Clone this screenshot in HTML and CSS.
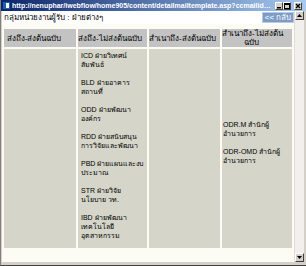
FILE: index.html
```html
<!DOCTYPE html>
<html lang="th">
<head>
    <meta charset="UTF-8">
    <title>detailmailtemplate</title>
    <link rel="stylesheet" href="styles.css">
</head>
<body>

    <div class="window">
        <div class="titlebar">
            <span class="app-icon"></span>
            <span class="title">http://nenuphar/iwebflow/home905/content/detailmailtemplate.asp?ccmailid=1024&amp;type=2</span>
            <span class="caption-buttons">
                <span class="cbtn">
                    <svg width="6" height="6" viewBox="0 0 6 6"><rect x="1" y="4" width="4" height="1.5" fill="#000"/></svg>
                </span>
                <span class="cbtn">
                    <svg width="6" height="6" viewBox="0 0 6 6"><rect x="0.5" y="0.5" width="5" height="5" fill="none" stroke="#000"/><rect x="0.5" y="0.5" width="5" height="1.5" fill="#000"/></svg>
                </span>
                <span class="cbtn close">
                    <svg width="6" height="6" viewBox="0 0 6 6"><path d="M1 1L5 5M5 1L1 5" stroke="#000" stroke-width="1.4"/></svg>
                </span>
            </span>
        </div>

        <div class="client">
            <div class="content">
                <div class="topbar">
                    <span class="group-label">กลุ่มหน่วยงานผู้รับ : ฝ่ายต่างๆ</span>
                    <span class="back-btn"><span class="arrows">&lt;&lt;</span> กลับ</span>
                </div>

                <table class="recipients">
                    <colgroup>
                        <col class="c1"><col class="c2"><col class="c3"><col class="c4">
                    </colgroup>
                    <tr>
                        <th>ส่งถึง-ส่งต้นฉบับ</th>
                        <th>ส่งถึง-ไม่ส่งต้นฉบับ</th>
                        <th>สำเนาถึง-ส่งต้นฉบับ</th>
                        <th>สำเนาถึง-ไม่ส่งต้น<br>ฉบับ</th>
                    </tr>
                    <tr>
                        <td></td>
                        <td class="list">
                            ICD ฝ่ายวิเทศน์<br>สัมพันธ์<br><br>
                            BLD ฝ่ายอาคาร<br>สถานที่<br><br>
                            ODD ฝ่ายพัฒนา<br>องค์กร<br><br>
                            RDD ฝ่ายสนับสนุน<br>การวิจัยและพัฒนา<br><br>
                            PBD ฝ่ายแผนและงบ<br>ประมาณ<br><br>
                            STR ฝ่ายวิจัย<br>นโยบาย วท.<br><br>
                            IBD ฝ่ายพัฒนา<br>เทคโนโลยี<br>อุตสาหกรรม
                        </td>
                        <td></td>
                        <td class="list middle">
                            ODR.M สำนักผู้<br>อำนวยการ<br><br>
                            ODR-OMD สำนักผู้<br>อำนวยการ
                        </td>
                    </tr>
                </table>
            </div>

            <div class="vscroll">
                <span class="sbtn">
                    <svg width="5" height="3" viewBox="0 0 5 3"><path d="M0 3L2.5 0L5 3Z" fill="#000"/></svg>
                </span>
                <span class="track"></span>
                <span class="sbtn">
                    <svg width="5" height="3" viewBox="0 0 5 3"><path d="M0 0L2.5 3L5 0Z" fill="#000"/></svg>
                </span>
            </div>
        </div>
    </div>

</body>
</html>
```

FILE: styles.css
```css
body {
    margin: 0;
    padding: 0;
    background-color: #d4d0c8;
    font-family: "Liberation Sans", "Noto Sans", sans-serif;
}

.window {
    width: 306px;
    height: 266px;
    box-sizing: border-box;
    display: flex;
    flex-direction: column;
    padding: 0 2px 3px 1px;
    background-color: #d4d0c8;
    border-left: 1px solid #808080;
    border-bottom: 1px solid #404040;
    overflow: hidden;
}

/* classic caption bar */
.titlebar {
    height: 11px;
    margin: 0 -2px 0 -1px;
    display: flex;
    align-items: center;
    background: linear-gradient(to right, #0a246a, #a6caf0);
    color: #fff;
    padding-left: 2px;
}

.app-icon {
    width: 7px;
    height: 7px;
    flex: none;
    background-color: #fff;
    border: 1px solid #1c5fb0;
    border-left-width: 3px;
    box-sizing: border-box;
    margin-right: 2px;
}

.title {
    flex: 1;
    min-width: 0;
    font-size: 7px;
    font-weight: bold;
    line-height: 11px;
    white-space: nowrap;
    overflow: hidden;
    text-overflow: ellipsis;
}

.caption-buttons {
    display: flex;
    flex: none;
    margin-left: 3px;
    margin-right: 4px;
}

.cbtn {
    width: 8px;
    height: 8px;
    box-sizing: border-box;
    display: flex;
    align-items: center;
    justify-content: center;
    background-color: #d4d0c8;
    border: 1px solid;
    border-color: #fff #404040 #404040 #fff;
}

.cbtn.close {
    margin-left: 3px;
}

.client {
    flex: 1;
    display: flex;
    min-height: 0;
}

.content {
    width: 292px;
    flex: none;
    background-color: #fcfcf4;
}

.topbar {
    height: 13px;
    background-color: #fff;
    display: flex;
    align-items: center;
    justify-content: space-between;
    padding-left: 2px;
    margin-bottom: 3px;
}

.group-label {
    font-size: 8px;
    color: #000;
}

.back-btn {
    width: 32px;
    height: 11px;
    box-sizing: border-box;
    background-color: #7f9ac4;
    border: 1px solid #b9cbe4;
    color: #fff;
    font-size: 8px;
    line-height: 9px;
    text-align: center;
}

.back-btn .arrows {
    color: #d6ecff;
    font-weight: bold;
}

.recipients {
    border-collapse: separate;
    border-spacing: 2px 2px;
    table-layout: fixed;
    width: 292px;
    font-size: 8px;
    line-height: 9px;
    color: #000;
}

.c1 { width: 72px; }
.c2 { width: 69px; }
.c3 { width: 71px; }
.c4 { width: 70px; }

.recipients th {
    background-color: #c3c3c3;
    font-weight: normal;
    padding: 0 12px 0 0;
    height: 18px;
    text-align: center;
    vertical-align: middle;
    white-space: nowrap;
    overflow: hidden;
}

.recipients td {
    background-color: #d5d5c9;
    padding: 2px 0 8px 3px;
    vertical-align: top;
    white-space: nowrap;
    overflow: hidden;
    font-size: 7px;
}

.recipients td.middle {
    vertical-align: middle;
    padding-left: 1px;
    padding-bottom: 15px;
}

.vscroll {
    width: 10px;
    flex: none;
    box-sizing: border-box;
    display: flex;
    flex-direction: column;
    background-color: #f1f0ec;
    border-left: 1px solid #e0ded6;
}

.sbtn {
    height: 9px;
    flex: none;
    display: flex;
    align-items: center;
    justify-content: center;
    background-color: #d4d0c8;
    border: 1px solid;
    border-color: #fff #404040 #404040 #fff;
    box-sizing: border-box;
}

.track {
    flex: 1;
}
```
